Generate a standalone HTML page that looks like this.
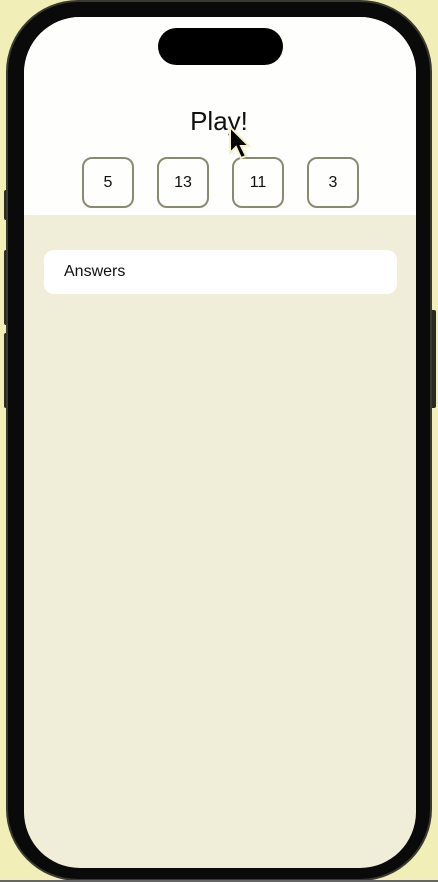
<!DOCTYPE html>
<html><head><style>
html,body{margin:0;padding:0}
body{width:438px;height:882px;background:#f2eeb8;position:relative;overflow:hidden;font-family:"Liberation Sans",sans-serif}
.abs{position:absolute}
.btn{background:#2a2a22;border-radius:2px}
.phone{left:8px;top:2px;width:422px;height:877px;background:#0a0a0a;border-radius:70px;box-shadow:0 0 0 2px #3a3a30}
.screen{left:24px;top:17px;width:392px;height:851px;border-radius:56px;background:#f0eed9;overflow:hidden}
.top{left:0;top:0;width:392px;height:198px;background:#fefefd}
.pill{left:158px;top:28px;width:125px;height:37px;background:#000;border-radius:19px}
.box{top:157px;width:48px;height:47px;border:2px solid #8a8a72;border-radius:10px;text-align:center;line-height:47px;font-size:16px;color:#111}
.card{left:44px;top:250px;width:353px;height:44px;background:#fff;border-radius:10px}
</style></head><body>
<div class="abs btn" style="left:4px;top:190px;width:6px;height:30px"></div>
<div class="abs btn" style="left:4px;top:250px;width:6px;height:75px"></div>
<div class="abs btn" style="left:4px;top:333px;width:6px;height:75px"></div>
<div class="abs btn" style="left:429px;top:310px;width:7px;height:98px"></div>
<div class="abs phone"></div>
<div class="abs screen"><div class="abs top"></div></div>
<div class="abs pill"></div>
<div class="abs" style="left:0;width:438px;top:106px;text-align:center;font-size:26px;color:#111">Play!</div>
<div class="abs box" style="left:82px">5</div>
<div class="abs box" style="left:157px">13</div>
<div class="abs box" style="left:232px">11</div>
<div class="abs box" style="left:307px">3</div>
<div class="abs card"><span class="abs" style="left:20px;top:13px;font-size:16px;color:#111">Answers</span></div>
<svg class="abs" style="left:228px;top:126px" width="26" height="38" viewBox="0 0 26 38"><path d="M2 1 L2 27 L8 21 L13 32 L18 30 L13 20 L21 20 Z" fill="#000" stroke="#f4f0c8" stroke-width="2"/></svg>
<div class="abs" style="left:0;top:880px;width:438px;height:2px;background:#666"></div>
</body></html>
